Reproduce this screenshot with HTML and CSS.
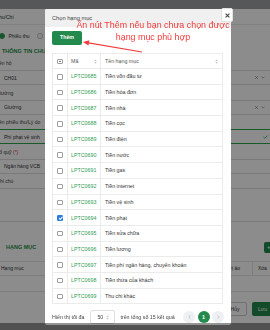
FILE: index.html
```html
<!DOCTYPE html>
<html>
<head>
    <meta charset="utf-8">
    <meta name="viewport" content="width=device-width, initial-scale=1">
    <title>Chọn hạng mục</title>
    <link rel="stylesheet" href="styles.css">
</head>
<body>
    <div class="page">
        <div class="topbar"></div>
        <div class="form">
            <div class="form-title">Thu/Chi</div>
            <div class="radios">
                <span class="radio checked"></span><span class="radio-label">Phiếu thu</span>
                <span class="radio"></span><span class="radio-label">Phiếu chi</span>
            </div>
            <div class="section-title">THÔNG TIN CHUNG</div>

            <div class="field">
                <div class="field-label">Tên hộ</div>
                <div class="input">CH01
                    <span class="select-tools">
                        <svg width="3" height="3" viewBox="0 0 3 3"><path d="M0.3 0.3L2.7 2.7M2.7 0.3L0.3 2.7" stroke="#888" stroke-width="0.8"/></svg>
                        <svg width="4" height="3" viewBox="0 0 4 3"><path d="M0.4 0.6L2 2.2L3.6 0.6" stroke="#888" stroke-width="0.7" fill="none"/></svg>
                    </span>
                </div>
            </div>
            <div class="field">
                <div class="field-label">Giường</div>
                <div class="input">Giường
                    <span class="select-tools">
                        <svg width="3" height="3" viewBox="0 0 3 3"><path d="M0.3 0.3L2.7 2.7M2.7 0.3L0.3 2.7" stroke="#888" stroke-width="0.8"/></svg>
                        <svg width="4" height="3" viewBox="0 0 4 3"><path d="M0.4 0.6L2 2.2L3.6 0.6" stroke="#888" stroke-width="0.7" fill="none"/></svg>
                    </span>
                </div>
            </div>
            <div class="field">
                <div class="field-label">Tên phiếu thu/Lý do</div>
                <div class="input valid">Phí phạt vệ sinh
                    <span class="select-tools">
                        <svg width="5" height="4" viewBox="0 0 5 4"><path d="M0.4 2L1.8 3.3L4.6 0.5" stroke="#2ea44f" stroke-width="0.9" fill="none"/></svg>
                    </span>
                </div>
            </div>
            <div class="field">
                <div class="field-label">Sổ quỹ <span class="required">(*)</span></div>
                <div class="input">Ngân hàng VCB</div>
            </div>
            <div class="field">
                <div class="field-label">Ghi chú</div>
                <div class="input textarea"></div>
            </div>

            <div class="section-row">
                <div class="section-title">HẠNG MỤC</div>
                <div class="add-btn">+ Thêm</div>
            </div>
            <div class="line-table">
                <div class="line-row head">
                    <div class="cell name">Hạng mục</div>
                    <div class="cell value">Giá trị ảo</div>
                    <div class="cell remove">Xóa</div>
                </div>
                <div class="line-row"></div>
            </div>
            <div class="form-actions">
                <div class="btn-cancel">Hủy</div>
                <div class="btn-save">Lưu</div>
            </div>
        </div>
    </div>

    <div class="overlay"></div>

    <div class="modal">
        <div class="modal-header">
            Chọn hạng mục
            <div class="modal-close">
                <svg width="5" height="5" viewBox="0 0 5 5"><path d="M0.6 0.6L4.4 4.4M4.4 0.6L0.6 4.4" stroke="#444" stroke-width="1.1"/></svg>
            </div>
        </div>
        <div class="modal-body">
            <div class="btn-add">Thêm</div>
            <table class="item-table">
                <colgroup>
                    <col style="width: 15px">
                    <col style="width: 33px">
                    <col>
                </colgroup>
                <thead>
                    <tr>
                        <th class="col-check"><span class="check partial"></span></th>
                        <th>Mã<span class="sort"><svg width="3" height="5" viewBox="0 0 3 5"><path d="M1.5 0.3L2.7 2H0.3Z M1.5 4.7L2.7 3H0.3Z" fill="#c4c4c4"/></svg></span></th>
                        <th>Tên hạng mục<span class="sort"><svg width="3" height="5" viewBox="0 0 3 5"><path d="M1.5 0.3L2.7 2H0.3Z M1.5 4.7L2.7 3H0.3Z" fill="#c4c4c4"/></svg></span></th>
                    </tr>
                </thead>
                <tbody>
                    <tr><td class="col-check"><span class="check"></span></td><td class="code">LPTC0685</td><td>Tiền vốn đầu tư</td></tr>
                    <tr><td class="col-check"><span class="check"></span></td><td class="code">LPTC0686</td><td>Tiền hóa đơn</td></tr>
                    <tr><td class="col-check"><span class="check"></span></td><td class="code">LPTC0687</td><td>Tiền nhà</td></tr>
                    <tr><td class="col-check"><span class="check"></span></td><td class="code">LPTC0688</td><td>Tiền cọc</td></tr>
                    <tr><td class="col-check"><span class="check"></span></td><td class="code">LPTC0689</td><td>Tiền điện</td></tr>
                    <tr><td class="col-check"><span class="check"></span></td><td class="code">LPTC0690</td><td>Tiền nước</td></tr>
                    <tr><td class="col-check"><span class="check"></span></td><td class="code">LPTC0691</td><td>Tiền gas</td></tr>
                    <tr><td class="col-check"><span class="check"></span></td><td class="code">LPTC0692</td><td>Tiền internet</td></tr>
                    <tr><td class="col-check"><span class="check"></span></td><td class="code">LPTC0693</td><td>Tiền vệ sinh</td></tr>
                    <tr><td class="col-check"><span class="check checked"></span></td><td class="code">LPTC0694</td><td>Tiền phạt</td></tr>
                    <tr><td class="col-check"><span class="check"></span></td><td class="code">LPTC0695</td><td>Tiền sửa chữa</td></tr>
                    <tr><td class="col-check"><span class="check"></span></td><td class="code">LPTC0696</td><td>Tiền lương</td></tr>
                    <tr><td class="col-check"><span class="check"></span></td><td class="code">LPTC0697</td><td>Tiền phí ngân hàng, chuyển khoản</td></tr>
                    <tr><td class="col-check"><span class="check"></span></td><td class="code">LPTC0698</td><td>Tiền thừa của khách</td></tr>
                    <tr><td class="col-check"><span class="check"></span></td><td class="code">LPTC0699</td><td>Thu chi khác</td></tr>
                </tbody>
            </table>
            <div class="table-footer">
                <span>Hiển thị tối đa</span>
                <span class="page-size">50
                    <svg width="3" height="5" viewBox="0 0 3 5"><path d="M1.5 0.3L2.7 2H0.3Z M1.5 4.7L2.7 3H0.3Z" fill="#c4c4c4"/></svg>
                </span>
                <span class="total">trên tổng số 15 kết quả</span>
                <div class="pager">
                    <span class="nav"><svg width="3" height="4" viewBox="0 0 3 4"><path d="M2.3 0.4L0.8 2L2.3 3.6" stroke="#aaa" stroke-width="0.6" fill="none"/></svg></span>
                    <span class="current">1</span>
                    <span class="nav"><svg width="3" height="4" viewBox="0 0 3 4"><path d="M0.7 0.4L2.2 2L0.7 3.6" stroke="#aaa" stroke-width="0.6" fill="none"/></svg></span>
                </div>
            </div>
        </div>

        <!-- annotation drawn over the dialog -->
        <div class="hint">
            <span class="hint-line">Ấn nút Thêm nếu bạn chưa chọn được</span>
            <span class="hint-line">hạng mục phù hợp</span>
        </div>
        <svg class="hint-arrow" width="186" height="60" viewBox="0 0 186 60">
            <path d="M97 43L42 33.6" stroke="#f23b3b" stroke-width="1.1"/>
            <path d="M38 33L44.3 31.3L43.5 36.6Z" fill="#f23b3b"/>
        </svg>
    </div>

    <div class="taskbar"></div>
</body>
</html>
```

FILE: styles.css
```css
* {
    box-sizing: border-box;
}
html, body {
    margin: 0;
}
body {
    width: 270px;
    height: 330px;
    overflow: hidden;
    position: relative;
    font-family: 'Liberation Sans', Arial, sans-serif;
    background: #fff;
    color: #333;
}

/* page behind the dialog */
.page {
    margin: 0 -10px 0 -6px;
}
.topbar {
    height: 9px;
    background: #9b9fa3;
}
.form {
    padding: 0 5px 0 2px;
    font-size: 5px;
}
.form-title {
    height: 16px;
    line-height: 16px;
    border-bottom: 1px solid #ececec;
    color: #333;
}
.radios {
    height: 21px;
    display: flex;
    align-items: center;
    padding-left: 2.5px;
}
.radio {
    width: 6px;
    height: 6px;
    border: 0.8px solid #bbb;
    border-radius: 50%;
    background: #fff;
}
.radio.checked {
    border: 1.4px solid #2a9d52;
    background: #2a9d52;
}
.radio-label {
    margin: 0 7px 0 4px;
    color: #333;
}
.section-title {
    height: 11px;
    line-height: 11px;
    padding-left: 6px;
    font-size: 5.5px;
    font-weight: bold;
    color: #1f8f47;
}
.field {
    margin-bottom: 1.5px;
}
.field-label {
    height: 13px;
    line-height: 13px;
    color: #444;
}
.required {
    color: #e04040;
}
.input {
    height: 15px;
    display: flex;
    align-items: center;
    padding: 0 9px 0 7px;
    border: 1px solid #dcdcdc;
    border-radius: 2px;
    background: #fff;
}
.input.valid {
    border-color: #2ea44f;
    padding-right: 6px;
}
.input.textarea {
    height: 34px;
}
.select-tools {
    margin-left: auto;
    display: flex;
    align-items: center;
    gap: 3px;
}
.section-row {
    height: 14px;
    margin-top: 18px;
    display: flex;
    align-items: center;
    justify-content: space-between;
}
.section-row .section-title {
    padding-left: 10px;
}
.add-btn {
    height: 11px;
    line-height: 11px;
    padding: 0 5px 0 3px;
    margin-right: -15px;
    border-radius: 2px;
    background: #23894d;
    color: #fff;
    font-weight: bold;
}
.line-table {
    margin-top: 6.5px;
}
.line-row {
    height: 16px;
    display: flex;
    border-bottom: 1px solid #e6e6e6;
}
.line-row.head {
    height: 15px;
    border-top: 1px solid #e6e6e6;
    align-items: center;
}
.line-row .cell {
    height: 100%;
    display: flex;
    align-items: center;
}
.cell.name {
    flex: 1;
    padding-left: 5px;
}
.cell.value {
    width: 50px;
    justify-content: flex-end;
    padding-right: 12px;
}
.cell.remove {
    width: 23px;
    padding-left: 5px;
    border-left: 1px solid #e6e6e6;
}
.form-actions {
    margin-top: 10px;
    display: flex;
    justify-content: flex-end;
    gap: 5px;
}
.btn-cancel, .btn-save {
    height: 14px;
    display: flex;
    align-items: center;
    border-radius: 2px;
}
.btn-cancel {
    width: 24px;
    justify-content: center;
    border: 1px solid #ccc;
    background: #fff;
}
.btn-save {
    width: 23px;
    padding-left: 6px;
    background: #23894d;
    color: #fff;
}

.overlay {
    position: fixed;
    left: 0;
    top: 0;
    right: 0;
    bottom: 0;
    background: rgba(0, 0, 0, 0.45);
}
.taskbar {
    position: fixed;
    left: 0;
    right: 0;
    bottom: 0;
    height: 7px;
    background: rgba(0, 0, 0, 0.42);
    z-index: 20;
}

/* dialog */
.modal {
    position: fixed;
    left: 45px;
    top: 9px;
    width: 186px;
    height: 316px;
    background: #fff;
    border-radius: 2px;
    z-index: 10;
}
.modal-header {
    height: 18px;
    line-height: 18px;
    padding-left: 7px;
    background: #f0f0f0;
    border-radius: 2px 2px 0 0;
    font-size: 5.7px;
    color: #444;
}
.modal-close {
    position: absolute;
    top: -1px;
    right: -2px;
    width: 12px;
    height: 14px;
    display: flex;
    align-items: center;
    justify-content: center;
    background: #fff;
    border: 1px solid #e2e2e2;
    border-radius: 2px;
}
.modal-body {
    padding: 4px 8px 0 7px;
}
.btn-add {
    width: 30px;
    height: 13.5px;
    line-height: 13.5px;
    margin-bottom: 8.5px;
    text-align: center;
    border-radius: 2px;
    background: #23894d;
    color: #fff;
    font-size: 5.3px;
    font-weight: bold;
}
.item-table {
    width: 171px;
    border-collapse: collapse;
    table-layout: fixed;
    font-size: 5.3px;
}
.item-table th, .item-table td {
    height: 15.7px;
    padding: 0 4px;
    border: 1px solid #ebebeb;
    text-align: left;
    font-weight: normal;
    white-space: nowrap;
    overflow: hidden;
}
.item-table th {
    height: 15px;
    color: #555;
}
.item-table td {
    color: #333;
}
.item-table .col-check {
    padding: 0;
    text-align: center;
}
.item-table td.code {
    padding-left: 3px;
    color: #2f9a55;
}
.item-table th:nth-child(2) {
    padding: 0 3px;
}
.sort {
    float: right;
    height: 5px;
    line-height: 0;
    margin-top: 0.5px;
}
.check {
    display: inline-block;
    width: 5.5px;
    height: 5.5px;
    border: 0.8px solid #9d9d9d;
    border-radius: 1px;
    vertical-align: middle;
    position: relative;
    background: #fff;
}
.check.partial::after {
    content: '';
    display: block;
    width: 2.6px;
    height: 0.8px;
    margin: 1.55px auto 0;
    background: #777;
}
.check.checked {
    background: #2b7fe0;
    border-color: #2b7fe0;
}
.check.checked::after {
    content: '';
    position: absolute;
    left: 1.3px;
    top: 0.1px;
    width: 1.3px;
    height: 2.6px;
    border: solid #fff;
    border-width: 0 0.8px 0.8px 0;
    transform: rotate(45deg);
}
.table-footer {
    height: 16px;
    margin-top: 5px;
    display: flex;
    align-items: center;
    font-size: 5.3px;
    color: #444;
}
.page-size {
    width: 25px;
    height: 14px;
    margin-left: 6px;
    padding: 0 5px 0 6px;
    display: flex;
    align-items: center;
    justify-content: space-between;
    border: 1px solid #dedede;
    border-radius: 2px;
}
.total {
    margin-left: 5px;
}
.pager {
    margin-left: auto;
    margin-right: -1px;
    display: flex;
    gap: 2.5px;
}
.pager span {
    width: 12px;
    height: 12px;
    border-radius: 50%;
    display: flex;
    align-items: center;
    justify-content: center;
    background: #eef0f3;
}
.pager .current {
    background: #23894d;
    color: #fff;
    font-weight: bold;
    font-size: 5.5px;
}
.hint {
    position: absolute;
    left: 20px;
    top: 10px;
    width: 176px;
    font-size: 8.9px;
    line-height: 12px;
    color: #f23b3b;
    pointer-events: none;
}
.hint-line {
    display: block;
    width: max-content;
    margin: 0 auto;
    white-space: nowrap;
}
.hint-arrow {
    position: absolute;
    left: 0;
    top: 0;
    overflow: visible;
}
```
